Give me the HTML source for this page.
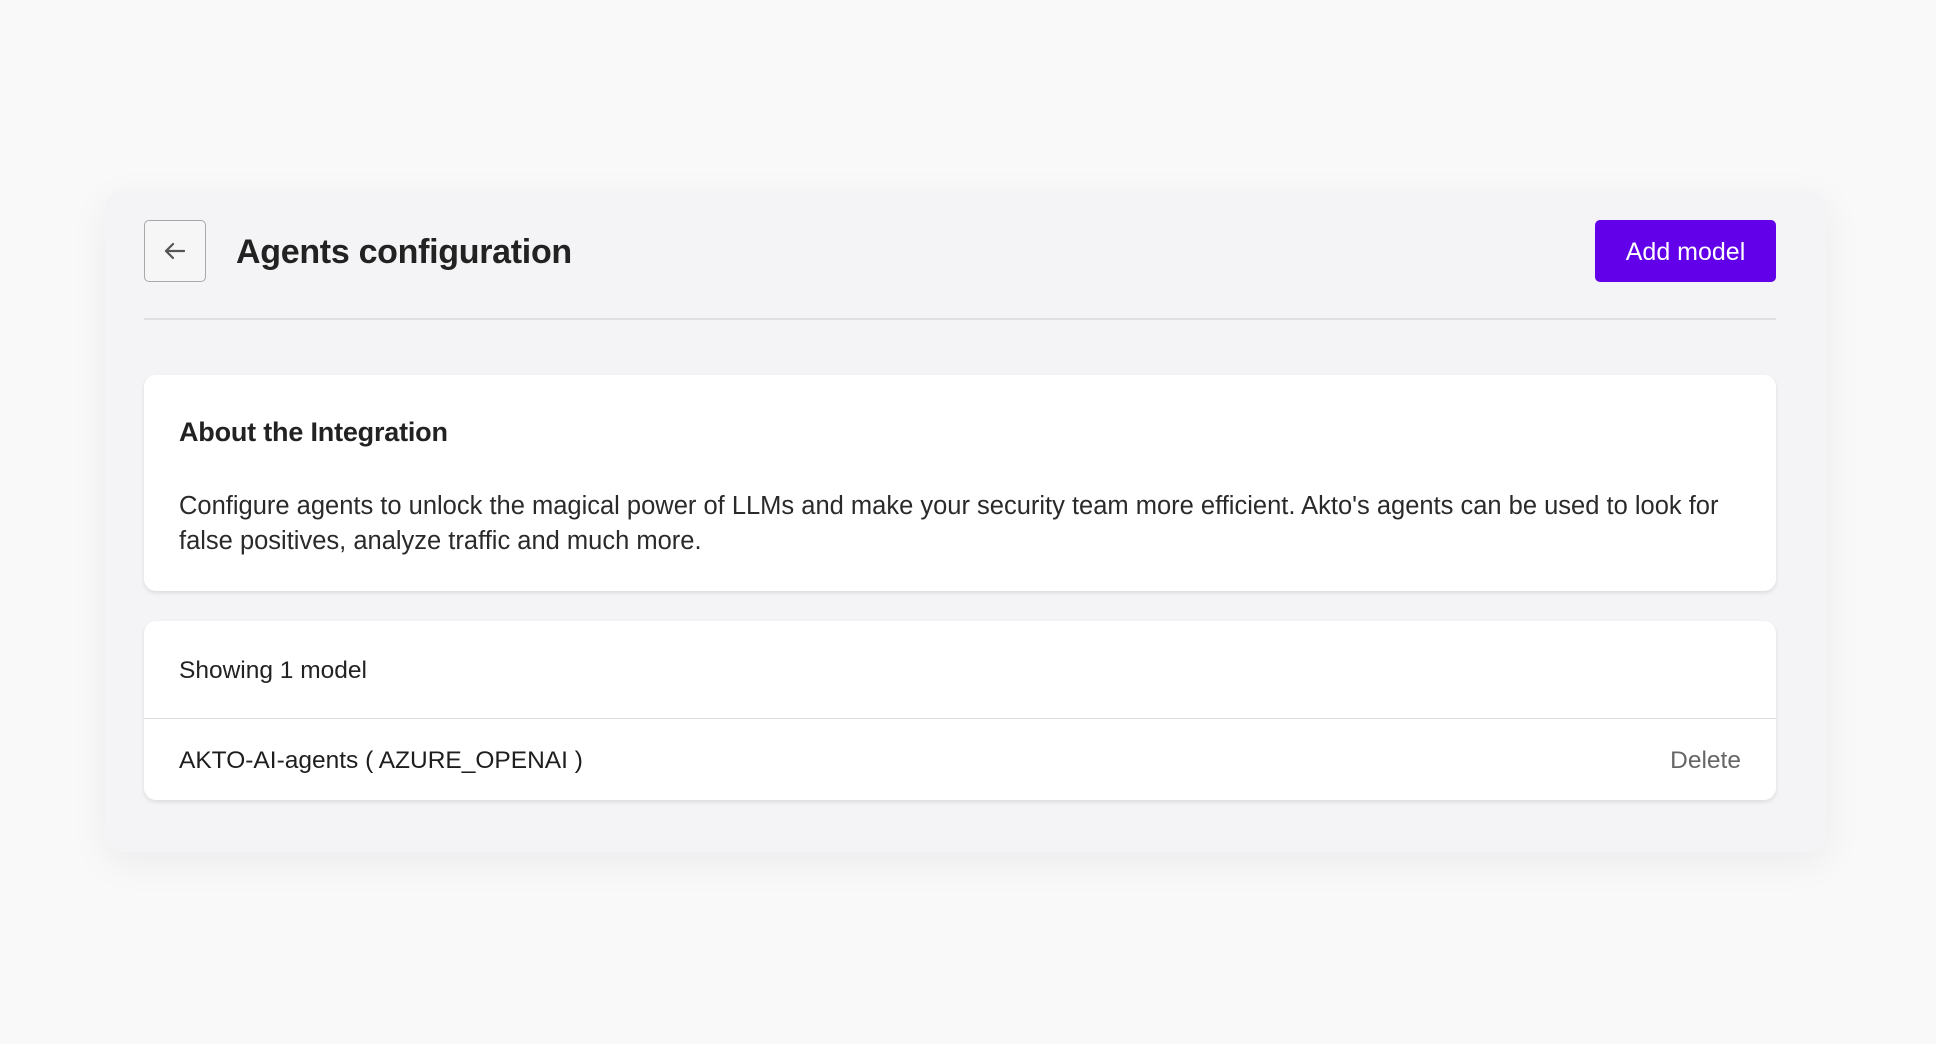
<!DOCTYPE html>
<html><head><style>
body{margin:0;width:1936px;height:1044px;background:#f9f9fa;font-family:"Liberation Sans",sans-serif;color:#222;position:relative;overflow:hidden}
.panel{position:absolute;left:105px;top:191px;width:1722px;height:661px;background:#f4f4f6;border-radius:18px;box-shadow:0 10px 40px rgba(0,0,0,0.06)}
.back{position:absolute;left:144px;top:220px;width:62px;height:62px;border:1px solid #a8a8ac;border-radius:5px;box-sizing:border-box;background:#f6f6f7}
.title{position:absolute;left:236px;top:233px;font-size:34px;font-weight:bold;color:#222;letter-spacing:-0.3px}
.btn{position:absolute;left:1595px;top:220px;width:181px;height:62px;background:#6200ea;border-radius:5px;color:#fff;font-size:25px;text-align:center;line-height:64px}
.hr{position:absolute;left:144px;top:318px;width:1632px;height:2px;background:#e0e0e3}
.card{position:absolute;left:144px;width:1632px;background:#fff;border-radius:12px;box-shadow:0 2px 4px rgba(0,0,0,0.1)}
.t{position:absolute;left:35px;white-space:nowrap}
</style></head><body>
<div class="panel"></div>
<div class="back"><svg width="60" height="60" viewBox="0 0 60 60"><path d="M39 30H21M28 23l-7 7 7 7" fill="none" stroke="#555" stroke-width="2.2" stroke-linecap="round" stroke-linejoin="round"/></svg></div>
<div class="title">Agents configuration</div>
<div class="btn">Add model</div>
<div class="hr"></div>
<div class="card" style="top:375px;height:216px">
<div class="t" style="top:42px;font-size:27px;font-weight:bold;letter-spacing:-0.2px">About the Integration</div>
<div class="t" style="top:114px;font-size:25.5px;line-height:35px;color:#2a2a2a">Configure agents to unlock the magical power of LLMs and make your security team more efficient. Akto's agents can be used to look for<br>false positives, analyze traffic and much more.</div>
</div>
<div class="card" style="top:621px;height:179px">
<div class="t" style="top:36px;font-size:24.5px">Showing 1 model</div>
<div style="position:absolute;left:0;top:97px;width:100%;height:1px;background:#dedee2"></div>
<div class="t" style="top:126px;font-size:24.5px;color:#1e1e1e">AKTO-AI-agents ( AZURE_OPENAI )</div>
<div style="position:absolute;right:35px;top:126px;font-size:24.5px;color:#666">Delete</div>
</div>
</body></html>
